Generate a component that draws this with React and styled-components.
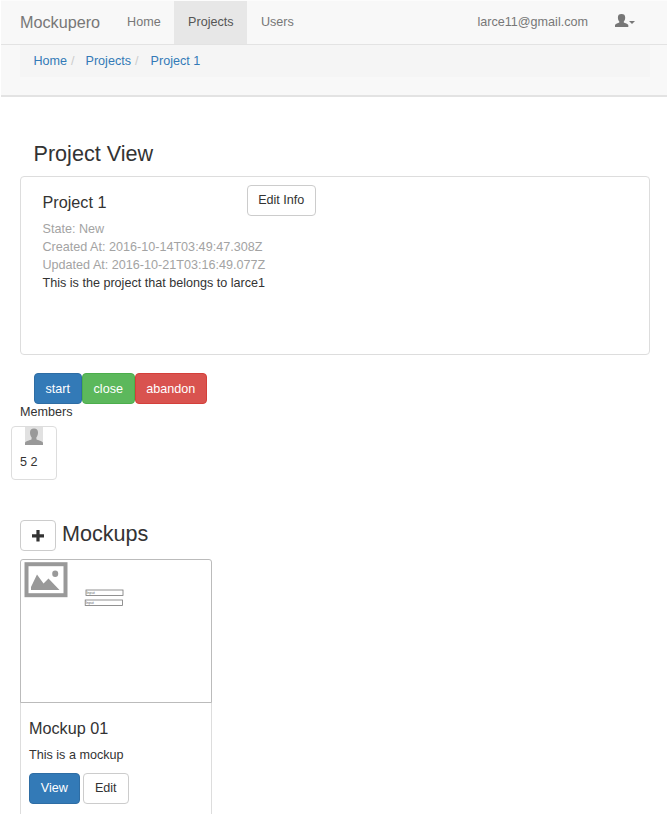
import React from "react";
import styled, { createGlobalStyle, css } from "styled-components";

const GlobalStyle = createGlobalStyle`
  * { box-sizing: border-box; }
  body {
    margin: 0;
    background: #fff;
    color: #333;
    font-family: "Liberation Sans", Arial, sans-serif;
    font-size: 12.6px;
    line-height: 18px;
  }
  a { color: inherit; text-decoration: none; }
`;

const Page = styled.div`
  height: 814px;
  overflow: hidden;
`;

const Header = styled.header`
  height: 97px;
  margin: 0 1px;
  border-top: 1px solid #fcfcfc;
  border-bottom: 2px solid #e3e3e3;
  background: #f8f8f8;
`;

const Navbar = styled.nav`
  display: flex;
  height: 44px;
  padding: 0 17.5px 0 19px;
  border-bottom: 1px solid #e3e3e3;
  color: #777;
`;

const Brand = styled.a`
  width: 93.4px;
  font-size: 16.2px;
  line-height: 43px;
`;

const NavItem = styled.a`
  padding: 0 13.7px;
  line-height: 42px;
  ${(p) => p.$active && css`
    background: #e7e7e7;
    color: #555;
  `}
`;

const Account = styled.div`
  display: flex;
  margin-left: auto;
  line-height: 42px;
`;

const UserMenu = styled.a`
  display: flex;
  width: 21px;
  margin: 12px 13.5px 0 27px;
  align-items: flex-start;
`;

const Caret = styled.span`
  margin: 8px 0 0;
  border: 3px solid transparent;
  border-top-color: #777;
  border-bottom: 0;
`;

const Breadcrumb = styled.nav`
  display: flex;
  height: 32px;
  margin: 0 17px 0 19px;
  padding: 7px 13.5px;
  background: #f5f5f5;
  color: #337ab7;
`;

const Separator = styled.span`
  width: ${(p) => p.$width || 18.4}px;
  padding-left: 4px;
  color: #ccc;
`;

const Main = styled.main`
  padding: 44px 18px 0 20px;
`;

const Heading = styled.h2`
  margin: 0;
  font-size: 21.6px;
  font-weight: 400;
  line-height: 26px;
  ${(p) => p.$inset && css`margin-left: 13.5px;`}
`;

const Subheading = styled.h3`
  margin: 0;
  font-size: 16.2px;
  font-weight: 400;
  line-height: 20px;
`;

const ProjectPanel = styled.section`
  display: flex;
  height: 179px;
  margin-top: 9px;
  padding: 8px 21.5px;
  border: 1px solid #ddd;
  border-radius: 4px;
`;

const ProjectInfo = styled.div`
  width: 204.5px;
  padding-top: 7px;
  white-space: nowrap;
`;

const Details = styled.div`
  margin-top: 8px;
`;

const Meta = styled.div`
  color: #a3a3a3;
`;

const variants = {
  plain: ["#fff", "#ccc", "#333"],
  primary: ["#337ab7", "#2e6da4", "#fff"],
  success: ["#5cb85c", "#4cae4c", "#fff"],
  danger: ["#d9534f", "#d43f3a", "#fff"],
};

const Button = styled.button`
  display: flex;
  flex: none;
  align-items: center;
  justify-content: center;
  width: ${(p) => p.$width}px;
  height: 31px;
  padding: 0 0.5px 0 0;
  border: 1px solid ${(p) => variants[p.$variant || "plain"][1]};
  border-radius: 4px;
  background: ${(p) => variants[p.$variant || "plain"][0]};
  color: ${(p) => variants[p.$variant || "plain"][2]};
  font: inherit;
`;

const EditInfoButton = styled(Button)`
  padding-bottom: 2px;
`;

const CaptionButton = styled(Button)`
  padding-bottom: 2px;
`;

const ButtonRow = styled.div`
  display: flex;
  gap: ${(p) => p.$gap || 0}px;
`;

const StateActions = styled(ButtonRow)`
  margin: 18px 0 0 14px;
`;

const MembersLabel = styled.div`
  line-height: 17px;
`;

const MemberCard = styled.div`
  width: 46px;
  height: 54px;
  margin: 5px 0 0 -9px;
  padding-left: 8px;
  border: 1px solid #ddd;
  border-radius: 4px;
`;

const Avatar = styled.svg`
  display: block;
  margin: 0 0 8px 5px;
`;

const MockupsHeader = styled.div`
  display: flex;
  gap: 6px;
  margin-top: 40px;
`;

const MockupsTitle = styled(Heading)`
  padding-top: 1px;
`;

const MockupCard = styled.article`
  width: 192px;
  height: 270px;
  margin-top: 8px;
  border: 1px solid #ddd;
  border-radius: 4px;
`;

const Preview = styled.svg`
  display: block;
  margin: -1px 0 0 -1px;
`;

const Caption = styled.div`
  padding: 15px 8px;
`;

const Description = styled.p`
  margin: 8px 0 9px;
`;

function UserIcon() {
  return (
    <svg width="14" height="14" viewBox="0 0 14 14" fill="#777">
      <path d="M6.500 1C9 1 10.200 2.200 10.200 4.400c0 1.800-.6 3.300-1.400 4v1c1.200.8 4.200 1.100 4.500 2.700V14H0v-1.900c.3-1.600 3.100-1.900 4.300-2.700v-1c-.8-.7-1.400-2.200-1.400-4C2.900 2.200 4 1 6.500 1Z" />
    </svg>
  );
}

function MemberAvatar() {
  return (
    <Avatar width="18" height="18" viewBox="0 0 18 18">
      <path fill="#e1e1e1" d="M0 0h18v18H0z" />
      <path fill="#999" d="M9 1.500c2.700 0 4 1.500 4 4 0 2-.7 3.900-1.600 4.700v2c1.400 1.200 5.600 1.300 6.600 3.500V18H0v-2.300c1-2.200 5.200-2.300 6.600-3.500v-2C5.700 9.400 5 7.500 5 5.500c0-2.500 1.300-4 4-4Z" />
    </Avatar>
  );
}

function MockupPreview() {
  return (
    <Preview width="192" height="144" viewBox="0 0 192 144">
      <path d="M.5 143.500V3Q.5.500 3 .5H189Q191.500.5 191.500 3V143.500Z" fill="#fff" stroke="#bbb" />
      <rect x="6.500" y="5.200" width="39" height="31" fill="#fff" stroke="#999" strokeWidth="4" />
      <path d="M11 31v-3L17 15.500 23.500 24.500 28.500 19.500 39.500 31Z" fill="#999" />
      <ellipse cx="35.200" cy="14.700" rx="3" ry="3.300" fill="#999" />
      <g fill="#fff" stroke="#777" strokeWidth=".8">
        <rect x="66" y="31" width="37" height="5.500" />
        <rect x="65.200" y="41" width="37.200" height="5.500" />
      </g>
      <g fill="#666" fontSize="3.700">
        <text x="66.500" y="35">Input</text>
        <text x="65.700" y="45">Input</text>
      </g>
    </Preview>
  );
}

export default function App() {
  return (
    <Page>
      <GlobalStyle />
      <Header>
        <Navbar>
          <Brand href="#">Mockupero</Brand>
          <NavItem href="#">Home</NavItem>
          <NavItem href="#" $active>Projects</NavItem>
          <NavItem href="#">Users</NavItem>
          <Account>
            <span>larce11@gmail.com</span>
            <UserMenu href="#" aria-label="Account menu">
              <UserIcon />
              <Caret />
            </UserMenu>
          </Account>
        </Navbar>
        <Breadcrumb>
          <a href="#">Home</a>
          <Separator>/</Separator>
          <a href="#">Projects</a>
          <Separator $width={19.6}>/</Separator>
          <a href="#">Project 1</a>
        </Breadcrumb>
      </Header>
      <Main>
        <Heading $inset>Project View</Heading>
        <ProjectPanel>
          <ProjectInfo>
            <Subheading>Project 1</Subheading>
            <Details>
              <Meta>State: New</Meta>
              <Meta>Created At: 2016-10-14T03:49:47.308Z</Meta>
              <Meta>Updated At: 2016-10-21T03:16:49.077Z</Meta>
              <div>This is the project that belongs to larce1</div>
            </Details>
          </ProjectInfo>
          <EditInfoButton $width={69}>Edit Info</EditInfoButton>
        </ProjectPanel>
        <StateActions>
          <Button $variant="primary" $width={48}>start</Button>
          <Button $variant="success" $width={53}>close</Button>
          <Button $variant="danger" $width={72}>abandon</Button>
        </StateActions>
        <MembersLabel>Members</MembersLabel>
        <MemberCard>
          <MemberAvatar />
          <span>5 2</span>
        </MemberCard>
        <MockupsHeader>
          <Button $width={36} aria-label="Add mockup">
            <svg width="12" height="12" viewBox="0 0 12 12">
              <path d="M4.400 0h3.200v4.200H12v3.200H7.600V11.600H4.400V7.400H0V4.200h4.400Z" fill="#333" />
            </svg>
          </Button>
          <MockupsTitle>Mockups</MockupsTitle>
        </MockupsHeader>
        <MockupCard>
          <MockupPreview />
          <Caption>
            <Subheading>Mockup 01</Subheading>
            <Description>This is a mockup</Description>
            <ButtonRow $gap={3}>
              <CaptionButton $variant="primary" $width={51}>View</CaptionButton>
              <CaptionButton $width={46}>Edit</CaptionButton>
            </ButtonRow>
          </Caption>
        </MockupCard>
      </Main>
    </Page>
  );
}
